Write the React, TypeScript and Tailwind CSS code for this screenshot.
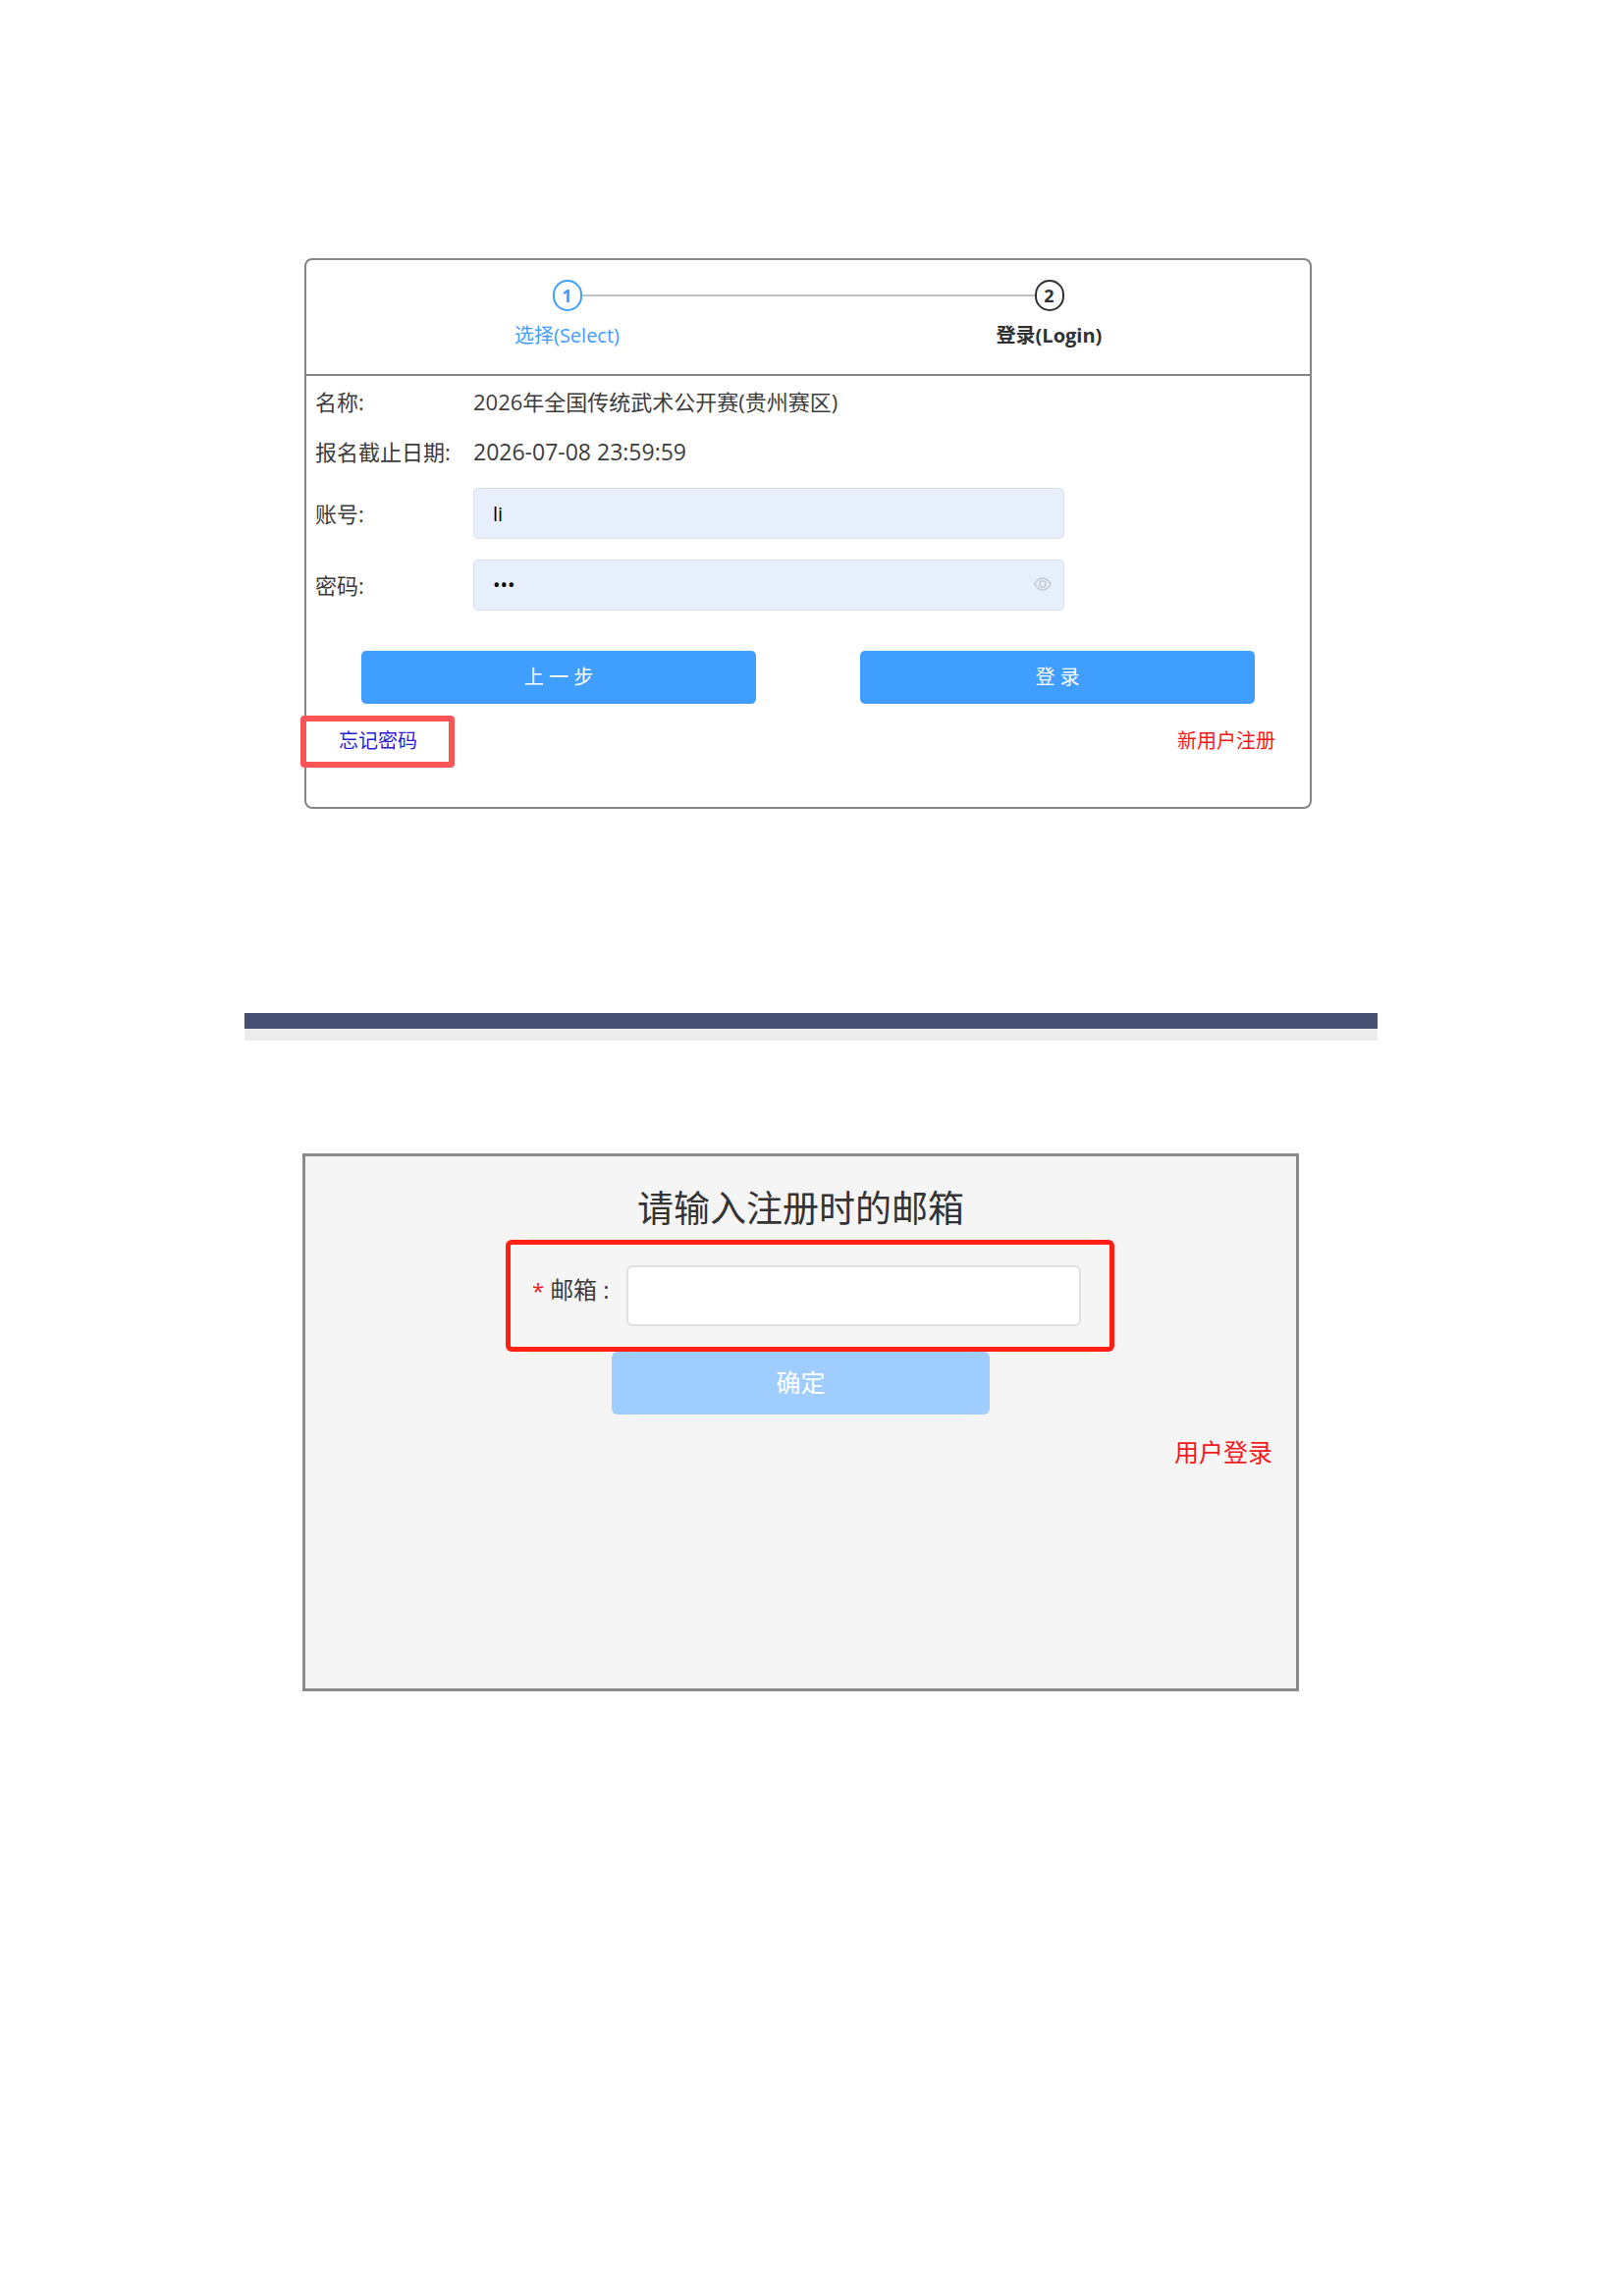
import { useState } from "react";

const EyeIcon = () => (
  <svg viewBox="0 0 1024 1024" className="size-[18px]" fill="currentColor" aria-hidden="true">
    <path d="M512 130c320 0 512 382 512 382S832 894 512 894 0 512 0 512s192-382 512-382zm0 84c-215 0-365 220-415 298 50 78 200 298 415 298s365-220 415-298c-50-78-200-298-415-298z" />
    <path d="M512 288a224 224 0 1 1 0 448 224 224 0 0 1 0-448zm0 84a140 140 0 1 0 0 280 140 140 0 0 0 0-280z" />
  </svg>
);

function Steps() {
  return (
    <ol className="flex border-b-2 border-[#858585] px-5 pt-5 pb-6 text-xl leading-[30px]">
      <li className="relative flex flex-1 flex-col items-center gap-[10px] text-[#409eff]">
        <span className="absolute top-[15px] left-1/2 h-0.5 w-full bg-[#c0c2c8]" />
        <span className="relative flex h-8 w-[30px] items-center justify-center rounded-full border-2 border-[#409eff] bg-white text-lg font-bold">
          1
        </span>
        <span>选择(Select)</span>
      </li>
      <li className="relative flex flex-1 flex-col items-center gap-[10px] font-bold text-[#303133]">
        <span className="flex h-8 w-[30px] items-center justify-center rounded-full border-2 border-[#303133] bg-white text-lg">
          2
        </span>
        <span>登录(Login)</span>
      </li>
    </ol>
  );
}

function LoginCard() {
  const [account, setAccount] = useState("li");
  const [password, setPassword] = useState("123");
  const [visible, setVisible] = useState(false);

  return (
    <section className="mr-[67px] ml-[61px] rounded-lg border-2 border-[#858585] pb-10">
      <Steps />
      <form onSubmit={(e) => e.preventDefault()}>
        <div className="pr-[10px] pl-[9px] text-[22px] leading-8 text-[#3c3c3c]">
          <div className="flex h-[51px] items-center">
            <span className="w-[161px] shrink-0">名称:</span>
            <span>2026年全国传统武术公开赛(贵州赛区)</span>
          </div>
          <div className="flex h-[51px] items-center">
            <span className="w-[161px] shrink-0">报名截止日期:</span>
            <span className="text-[23px]">2026-07-08 23:59:59</span>
          </div>
          <div className="mt-3 flex items-center">
            <label htmlFor="account" className="w-[161px] shrink-0">
              账号:
            </label>
            <input
              id="account"
              value={account}
              onChange={(e) => setAccount(e.target.value)}
              className="h-[52px] w-full max-w-[602px] rounded-[5px] border border-[#dae0ea] bg-[#e8effc] px-[19px] text-xl text-black outline-none"
            />
          </div>
          <div className="mt-[21px] flex items-center">
            <label htmlFor="password" className="w-[161px] shrink-0">
              密码:
            </label>
            <div className="flex h-[52px] w-full max-w-[602px] items-center rounded-[5px] border border-[#d5dfea] bg-[#e8effc] pr-3 pl-[19px]">
              <input
                id="password"
                type={visible ? "text" : "password"}
                value={password}
                onChange={(e) => setPassword(e.target.value)}
                className="min-w-0 flex-1 bg-transparent text-xl text-black outline-none"
              />
              <button
                type="button"
                aria-label="显示密码"
                onClick={() => setVisible(!visible)}
                className="pb-0.5 text-[#c3c9d4]"
              >
                <EyeIcon />
              </button>
            </div>
          </div>
        </div>
        <div className="mt-[41px] flex gap-[106px] px-14 text-xl text-white">
          <button type="button" className="h-[54px] flex-1 rounded-[5px] bg-[#409eff]">
            上 一 步
          </button>
          <button type="submit" className="h-[54px] flex-1 rounded-[5px] bg-[#409eff]">
            登 录
          </button>
        </div>
        <div className="mt-3 flex items-center justify-between pr-[35px] text-xl">
          <a
            href="#forgot"
            className="-ml-1.5 flex h-[53px] w-[157px] items-center rounded-[4px] border-[6px] border-[#fb5555] pb-0.5 pl-[33px] text-[#2a1fd6]"
          >
            忘记密码
          </a>
          <a href="#register" className="pb-0.5 text-[#f5191d]">
            新用户注册
          </a>
        </div>
      </form>
    </section>
  );
}

function ResetCard() {
  const [email, setEmail] = useState("");

  return (
    <section className="mr-20 ml-[59px] border-[3px] border-[#8a8a8a] bg-[#f5f5f5] pb-[221px] text-[25px]">
      <form className="flex flex-col items-center" onSubmit={(e) => e.preventDefault()}>
        <h1 className="pt-7 text-[37px] leading-[50px] text-[#333]">请输入注册时的邮箱</h1>
        <div className="mt-[7px] ml-[19px] flex h-[114px] w-full max-w-[620px] items-center rounded-md border-[5px] border-[#ff1f14] pr-[29px] pl-[22px]">
          <label htmlFor="email" className="w-24 shrink-0 pb-3 text-2xl text-[#3c3c3c]">
            <span className="pr-1.5 text-[22px] text-[#f5191d]">*</span>
            邮箱 :
          </label>
          <input
            id="email"
            type="email"
            value={email}
            onChange={(e) => setEmail(e.target.value)}
            className="h-[62px] min-w-0 flex-1 rounded-[6px] border-2 border-[#e0e0e2] bg-white px-5 outline-none"
          />
        </div>
        <button type="submit" className="h-16 w-[385px] rounded-[6px] bg-[#a0cdff] text-white">
          确定
        </button>
        <a href="#login" className="mt-[18px] mr-6 self-end leading-[40px] text-[#f5191d]">
          用户登录
        </a>
      </form>
    </section>
  );
}

export default function App() {
  return (
    <main className="min-h-screen bg-white pt-[263px] pr-[250px] pb-20 pl-[249px] font-['Open_Sans','Noto_Sans_CJK_SC',sans-serif]">
      <LoginCard />
      <div className="mt-[208px] h-7 border-b-[12px] border-[#ececec] bg-[#455073]" />
      <div className="mt-[115px]">
        <ResetCard />
      </div>
    </main>
  );
}
